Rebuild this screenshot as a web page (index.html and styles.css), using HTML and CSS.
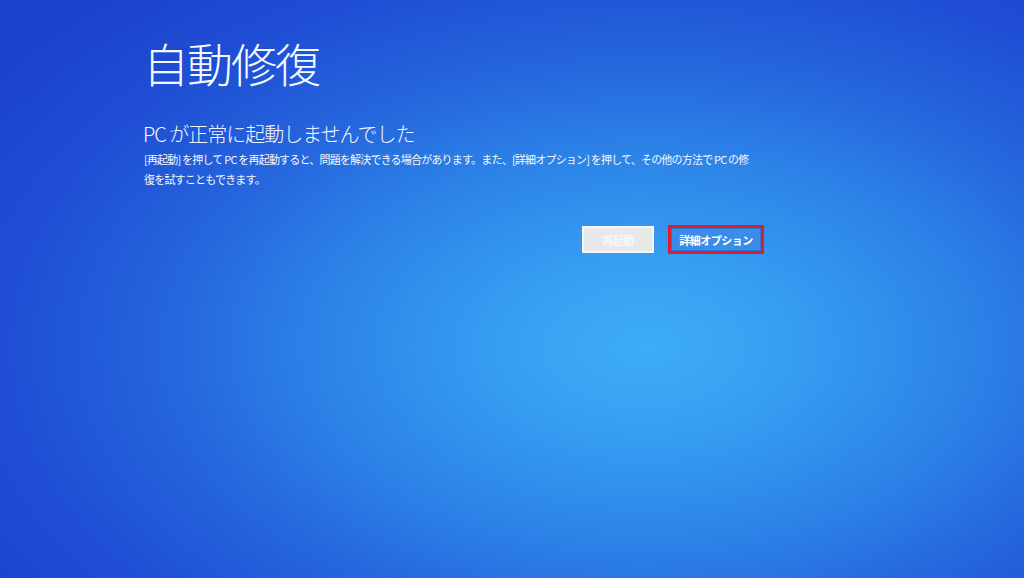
FILE: index.html
```html
<!DOCTYPE html>
<html lang="ja">
<head>
<meta charset="utf-8">
<title>自動修復</title>
<link rel="stylesheet" href="styles.css">
</head>
<body>
<main class="screen">
  <h1 class="title">自動修復</h1>
  <h2 class="subtitle">PC が正常に起動しませんでした</h2>
  <p class="message">[再起動] を押して PC を再起動すると、問題を解決できる場合があります。また、[詳細オプション] を押して、その他の方法で PC の修<br>復を試すこともできます。</p>
  <div class="actions">
    <button class="btn btn-restart">再起動</button>
    <span class="highlight"><button class="btn btn-advanced">詳細オプション</button></span>
  </div>
</main>
</body>
</html>
```

FILE: styles.css
```css
html, body {
  margin: 0;
  padding: 0;
  height: 100%;
}
body {
  width: 1024px;
  height: 578px;
  overflow: hidden;
  background: radial-gradient(ellipse 80% 85% at 63% 60%, #3eacf7 0%, #369ef2 18%, #2d85e8 38%, #2566dd 58%, #1f4ed4 78%, #1b40cc 100%);
  font-family: "Noto Sans CJK JP", "Noto Sans", sans-serif;
  color: #f4f8ff;
}
.screen {
  padding: 39px 0 0 143px;
  width: 621px;
}
.title {
  margin: 0;
  font-size: 46px;
  line-height: 46px;
  font-weight: 300;
  letter-spacing: -2px;
}
.subtitle {
  margin: 37px 0 0 0;
  font-size: 20px;
  line-height: 24px;
  font-weight: 300;
  letter-spacing: -1px;
}
.message {
  margin: 3px 0 0 1px;
  font-size: 11px;
  line-height: 20px;
  letter-spacing: -0.8px;
  white-space: nowrap;
}
.actions {
  margin-top: 36px;
  display: flex;
  justify-content: flex-end;
  align-items: center;
  gap: 14px;
}
.btn {
  font-family: "Noto Sans CJK JP", sans-serif;
  font-weight: 700;
  font-size: 11px;
  letter-spacing: -0.5px;
  padding: 0;
  margin: 0;
  cursor: default;
}
.btn-restart {
  width: 72px;
  height: 27px;
  background: #e6e8ea;
  border: 2px solid #f6f7f8;
  color: #f8f9fa;
}
.highlight {
  display: flex;
  border: 3px solid #d71f2e;
}
.btn-advanced {
  width: 90px;
  height: 23px;
  background: #3a8ce9;
  border: 1px solid #2f74d4;
  color: #ffffff;
}
```
